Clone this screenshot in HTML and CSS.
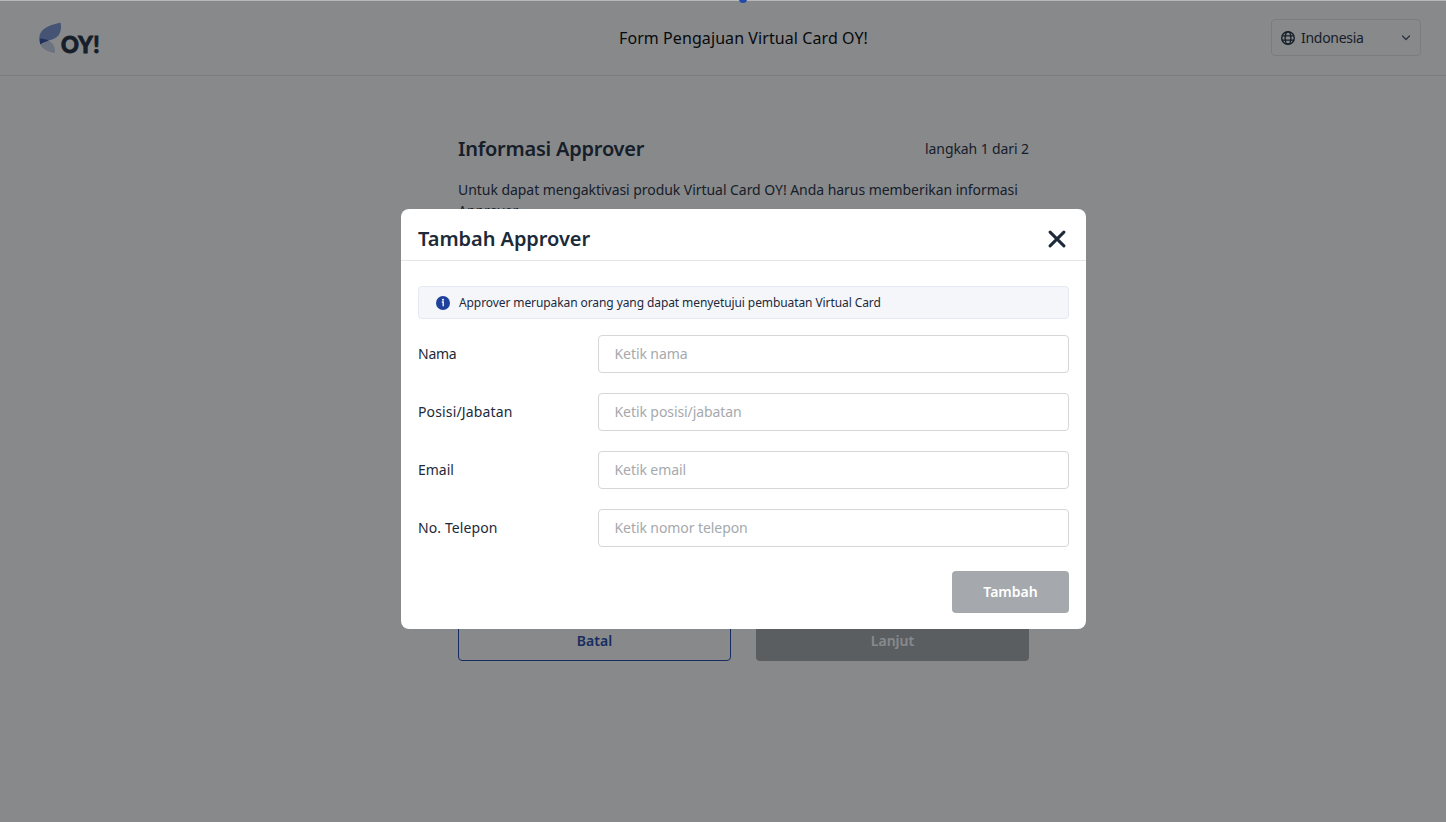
FILE: index.html
```html
<!DOCTYPE html>
<html lang="id">
<head>
<meta charset="utf-8">
<title>Form Pengajuan Virtual Card OY!</title>
<link rel="stylesheet" href="styles.css">
</head>
<body>
<div class="page">
  <header class="header">
    <div class="logo">
      <svg class="leaf" width="24" height="34" viewBox="0 0 24 34">
        <path class="leaf-top" d="M1.200 22.500C-1.500 13 3 8.500 9 5.500C14 3.200 18.500 2.500 21.500 1.500C22.600 6.500 22 11.500 19 15C15.500 19 6 19.500 1.200 23.500Z"/>
        <path class="leaf-bottom" d="M9.500 19.600C13.500 22 16.500 25.500 15.800 32C10.500 31.200 4 29 1.500 24C4 21.500 6.500 20.500 9.500 19.600Z"/>
        <path class="leaf-core" d="M0.700 17.500C4 17.500 7.500 18.500 9.800 19.700C6.500 20.700 3.500 21.500 1.400 23.500C0.800 21.500 0.500 19.500 0.700 17.500Z"/>
      </svg>
      <span class="logo-text">OY!</span>
    </div>
    <h1 class="header-title">Form Pengajuan Virtual Card OY!</h1>
    <div class="language">
      <svg width="14" height="14" viewBox="0 0 14 14" fill="none" stroke="currentColor" stroke-width="1.400">
        <circle cx="7" cy="7" r="6.300"/><ellipse cx="7" cy="7" rx="2.900" ry="6.300"/><path d="M1 4.900H13M1 9.100H13"/>
      </svg>
      <span class="language-name">Indonesia</span>
      <svg class="chevron" width="10" height="6" viewBox="0 0 10 6"><path d="M1.500 1L5 4.500L8.500 1"/></svg>
    </div>
  </header>
  <main class="content">
    <div class="heading">
      <h2 class="heading-title">Informasi Approver</h2>
      <span class="step">langkah 1 dari 2</span>
    </div>
    <p class="intro">Untuk dapat mengaktivasi produk Virtual Card OY! Anda harus memberikan informasi <span>Approver.</span></p>
    <div class="actions">
      <button class="action cancel">Batal</button>
      <button class="action next">Lanjut</button>
    </div>
  </main>
</div>
<div class="overlay">
  <section class="modal">
    <div class="modal-head">
      <h2 class="modal-title">Tambah Approver</h2>
      <svg width="18" height="18" viewBox="0 0 18 18" fill="none" stroke="currentColor" stroke-width="3" stroke-linecap="round"><path d="M2.100 2.100L15.900 15.900M15.900 2.100L2.100 15.900"/></svg>
    </div>
    <div class="modal-body">
      <div class="info">
        <svg width="14" height="14" viewBox="0 0 14 14"><circle cx="7" cy="7" r="7" fill="#1e429b"/><circle cx="7" cy="3.700" r="1" fill="#fff"/><path d="M5.800 6H7.200V10.200" fill="none" stroke="#fff" stroke-width="1.300"/></svg>
        <span class="info-text">Approver merupakan orang yang dapat menyetujui pembuatan Virtual Card</span>
      </div>
      <label class="field"><span class="label l-name">Nama</span><input class="input" placeholder="Ketik nama"></label>
      <label class="field"><span class="label l-role">Posisi/Jabatan</span><input class="input" placeholder="Ketik posisi/jabatan"></label>
      <label class="field"><span class="label">Email</span><input class="input" placeholder="Ketik email"></label>
      <label class="field"><span class="label l-phone">No. Telepon</span><input class="input" placeholder="Ketik nomor telepon"></label>
      <button class="submit">Tambah</button>
    </div>
  </section>
</div>
<div class="top-line"><i class="top-dot"></i></div>
</body>
</html>
```
FILE: styles.css
```css
* { box-sizing: border-box; }
body { margin: 0; height: 822px; overflow: hidden; background: #fff; color: #1c2a3a; font-family: "Noto Sans", "Open Sans", sans-serif; font-size: 14px; }
h1, h2, p { margin: 0; }
button, input { font: inherit; }
svg { flex: none; display: block; }
.page { height: 822px; }
.header { height: 76px; border-bottom: 1px solid #e4e5e7; padding: 0 25px 0 39px; display: grid; grid-template-columns: 1fr auto 1fr; align-items: center; }
.logo { display: flex; align-items: center; height: 34px; }
.leaf-top { fill: #7a92d2; }
.leaf-bottom { fill: #c8d2e8; }
.leaf-core { fill: #2f4ca6; }
.logo-text { font: 900 22px/22px Lato, sans-serif; letter-spacing: 0.5px; -webkit-text-stroke: 0.900px currentColor; margin: 15px 0 0 -2px; }
.header-title { font-size: 16px; font-weight: 400; line-height: 24px; letter-spacing: 0.08px; color: #000; padding-left: 27px; }
.language { justify-self: end; width: 150px; height: 37px; border: 1px solid #e4e5e7; border-radius: 4px; display: flex; align-items: center; padding: 0 9px; }
.language-name { margin-left: 6px; flex: 1; letter-spacing: -0.28px; }
.chevron { fill: none; stroke: #46536a; stroke-width: 1.300; stroke-linecap: round; stroke-linejoin: round; }
.content { width: 571px; margin: 0 0 0 458px; padding-top: 59px; }
.heading { display: flex; justify-content: space-between; align-items: center; height: 27px; }
.heading-title { font-size: 20px; font-weight: 600; line-height: 27px; letter-spacing: -0.22px; }
.step { letter-spacing: -0.1px; }
.intro { margin-top: 17px; line-height: 21px; height: 42px; letter-spacing: -0.05px; }
.actions { margin-top: 399px; display: grid; grid-template-columns: 1fr 1fr; gap: 25px; }
.action { height: 41px; border-radius: 4px; font-weight: 600; font-size: 14px; padding: 0; }
.cancel { border: 1px solid #1e46a8; color: #1e46a8; background: none; }
.next { border: 0; color: #fff; background: #a5a9ab; }
.overlay { position: fixed; inset: 0; background: rgba(16, 20, 23, 0.5); }
.modal { width: 685px; height: 420px; margin: 209px 0 0 401px; background: #fff; border-radius: 8px; }
.modal-head { height: 52px; border-bottom: 1px solid #e4e5e7; display: flex; justify-content: space-between; align-items: center; padding: 8px 20.500px 0 17px; }
.modal-title { font-size: 20px; font-weight: 600; line-height: 27px; letter-spacing: -0.05px; }
.modal-body { padding: 25px 17px 0; display: flex; flex-direction: column; }
.info { height: 33px; border: 1px solid #e3e9f5; border-radius: 4px; background: #f4f6fa; display: flex; align-items: center; padding-left: 16.500px; margin-bottom: 16px; }
.info-text { font-size: 12px; margin-left: 9.500px; letter-spacing: -0.09px; }
.field { display: flex; height: 38px; margin-bottom: 20px; align-items: center; }
.label { width: 179.500px; padding-bottom: 2px; }
.l-name { letter-spacing: -0.25px; }
.l-role { letter-spacing: 0.15px; }
.l-phone { letter-spacing: 0.1px; }
.input { flex: 1; min-width: 0; height: 38px; border: 1px solid #d5d6d8; border-radius: 4px; padding: 0 16px 2px; background: #fff; letter-spacing: -0.08px; }
.input::placeholder { color: #a5a9ad; opacity: 1; }
.submit { align-self: flex-end; width: 117px; height: 42px; margin-top: 4px; padding: 0 0 2px; border: 0; border-radius: 4px; background: #a5a9ad; color: #fff; font-weight: 600; }
.top-line { position: absolute; top: 0; left: 0; right: 0; height: 1px; background: #b5b9bc; }
.top-dot { position: absolute; left: 739px; top: -5px; width: 8px; height: 8px; border-radius: 50%; background: #2149a8; }
```
